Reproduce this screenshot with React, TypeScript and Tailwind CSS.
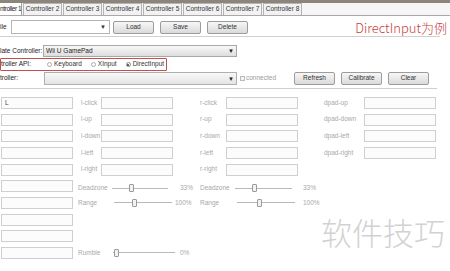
import React from 'react';

const tabs = ['Controller 2', 'Controller 3', 'Controller 4', 'Controller 5', 'Controller 6', 'Controller 7', 'Controller 8'];

function Btn({ label }: { label: string }) {
  return (
    <div className="w-[41px] h-[13px] flex items-center justify-center border border-[#9c9c9c] rounded-[2px] bg-linear-to-b from-[#f7f7f7] to-[#dadada] text-[#333]">
      {label}
    </div>
  );
}

function Box({ text }: { text?: string }) {
  return (
    <div className="h-[12px] w-[72px] shrink-0 border border-[#cfcfcf] bg-[#fcfcfc] flex items-center pl-[3px] text-[#444]">
      {text}
    </div>
  );
}

function Label({ text, w }: { text: string; w: string }) {
  return <div className={`${w} shrink-0 whitespace-nowrap`}>{text}</div>;
}

function Slider({ w, thumb }: { w: string; thumb: string }) {
  return (
    <div className={`${w} shrink-0 relative h-[8px] flex items-center`}>
      <div className="w-full h-px bg-[#b8b8b8]" />
      <div className={`absolute top-0 ${thumb} w-[5px] h-[8px] rounded-[1px] border border-[#9a9a9a] bg-[#f2f2f2]`} />
    </div>
  );
}

const rowsA = [
  ['L', 'l-click', 'r-click', 'dpad-up'],
  ['', 'l-up', 'r-up', 'dpad-down'],
  ['', 'l-down', 'r-down', 'dpad-left'],
  ['', 'l-left', 'r-left', 'dpad-right'],
  ['', 'l-right', 'r-right', ''],
];

export default function App() {
  return (
    <div className="w-[450px] h-[271px] relative overflow-hidden bg-white text-[6.5px] text-[#222] font-['Liberation_Sans',sans-serif] leading-none">
      <div className="h-[3px] bg-[#8d847b]" />
      {/* tabs */}
      <div className="flex h-[13px] border-b border-[#a8a8a8] bg-[#f6f6f6]">
        <div className="w-[22px] bg-white border-r border-[#a0a0a0] whitespace-nowrap flex items-center tracking-[-0.4px]">
          ntroller 1
        </div>
        {tabs.map((t) => (
          <div key={t} className="w-[39px] ml-[1px] border-x border-t border-[#b4b4b4] bg-[#f2f2f2] flex items-center justify-center whitespace-nowrap text-[#333]">
            {t}
          </div>
        ))}
      </div>

      {/* file row */}
      <div className="flex items-center h-[14px] mt-[4px]">
        <Label text="ile" w="w-[11px]" />
        <div className="w-[99px] h-[14px] border border-[#b5b5b5] bg-white flex items-center justify-end pr-[3px] text-[#333]">
          <span className="text-[6px]">▼</span>
        </div>
        <div className="flex gap-[6px] ml-[3px]">
          <Btn label="Load" />
          <Btn label="Save" />
          <Btn label="Delete" />
        </div>
        <div className="ml-auto mr-[3px] text-[13px] text-[#c8403c] font-['Noto_Sans_CJK_SC',sans-serif] font-light">
          DirectInput为例
        </div>
      </div>
      <div className="h-px bg-[#d0d0d0] mt-[2px] w-[440px]" />

      {/* emulate */}
      <div className="flex items-center h-[12px] mt-[8px]">
        <Label text="late Controller:" w="w-[43px]" />
        <div className="w-[194px] h-[12px] border border-[#a8a8a8] bg-linear-to-b from-[#f8f8f8] to-[#dedede] flex items-center justify-between px-[2px]">
          <span>Wii U GamePad</span>
          <span className="text-[6px]">▼</span>
        </div>
      </div>

      {/* api */}
      <div className="mt-[1px] w-[167px] h-[13px] border-[1.5px] border-[#c0504d] rounded-[1px] flex items-center">
        <Label text="troller API:" w="w-[46px]" />
        <div className="flex items-center gap-[1px] text-[#333]">
          <div className="w-[5px] h-[5px] rounded-full border border-[#aaa] bg-white" />
          <span className="ml-[1px]">Keyboard</span>
          <div className="w-[5px] h-[5px] rounded-full border border-[#aaa] bg-white ml-[8px]" />
          <span className="ml-[1px]">XInput</span>
          <div className="w-[5px] h-[5px] rounded-full border border-[#888] bg-white ml-[8px] flex items-center justify-center">
            <div className="w-[2px] h-[2px] rounded-full bg-[#333]" />
          </div>
          <span className="ml-[1px]">DirectInput</span>
        </div>
      </div>

      {/* controller */}
      <div className="flex items-center h-[13px] mt-[1px]">
        <Label text="troller:" w="w-[44px]" />
        <div className="w-[193px] h-[13px] border border-[#b0b0b0] bg-linear-to-b from-[#f8f8f8] to-[#e4e4e4] flex items-center justify-end pr-[2px]">
          <span className="text-[6px]">▼</span>
        </div>
        <div className="w-[57px] flex items-center pl-[3px] text-[#9a9a9a]">
          <div className="w-[5px] h-[5px] border border-[#bbb] bg-[#f2f2f2]" />
          <span className="ml-[1px]">connected</span>
        </div>
        <div className="flex gap-[6px]">
          <Btn label="Refresh" />
          <Btn label="Calibrate" />
          <Btn label="Clear" />
        </div>
      </div>
      <div className="h-px bg-[#cfcfcf] mt-[3px] w-[437px]" />

      {/* grid */}
      <div className="mt-[8px] pl-[1px] flex flex-col text-[#a8a8a8]">
        {rowsA.map((r, i) => (
          <div key={i} className="flex items-start h-[16.67px]">
            <Box text={r[0]} />
            <div className="w-[28px] pl-[8px] h-[12px] flex items-center">{r[1]}</div>
            <Box />
            <div className="w-[53px] pl-[27px] h-[12px] flex items-center">{r[2]}</div>
            <Box />
            <div className="w-[66px] pl-[26px] h-[12px] flex items-center">{r[3]}</div>
            {r[3] && <Box />}
          </div>
        ))}
        <div className="flex items-start h-[16.67px]">
          <Box />
          <div className="w-[39px] pl-[5px] h-[12px] flex items-center pt-[4px]">Deadzone</div>
          <div className="h-[12px] flex items-center pt-[4px]">
            <Slider w="w-[56px]" thumb="left-[17px]" />
            <div className="w-[32px] pl-[12px]">33%</div>
            <div className="w-[35px]">Deadzone</div>
            <Slider w="w-[57px]" thumb="left-[17px]" />
            <div className="pl-[11px]">33%</div>
          </div>
        </div>
        <div className="flex items-start h-[16.67px]">
          <Box />
          <div className="w-[41px] pl-[5px] h-[12px] flex items-center">Range</div>
          <div className="h-[12px] flex items-center">
            <Slider w="w-[58px]" thumb="left-[18px]" />
            <div className="w-[28px] pl-[3px]">100%</div>
            <div className="w-[37px]">Range</div>
            <Slider w="w-[58px]" thumb="left-[20px]" />
            <div className="pl-[8px]">100%</div>
          </div>
        </div>
        <div className="flex items-start h-[16.67px]">
          <Box />
        </div>
        <div className="flex items-start h-[16.67px]">
          <Box />
        </div>
        <div className="flex items-start h-[16.67px]">
          <Box />
          <div className="w-[40px] pl-[5px] h-[12px] flex items-center">Rumble</div>
          <div className="h-[12px] flex items-center">
            <Slider w="w-[62px]" thumb="left-[1px]" />
            <div className="pl-[5px]">0%</div>
          </div>
        </div>
      </div>

      <div className="absolute left-[321px] top-[216px] text-[31px] leading-none text-[#d2d2d2] font-['Noto_Sans_CJK_SC',sans-serif] font-light">
        软件技巧
      </div>
    </div>
  );
}
